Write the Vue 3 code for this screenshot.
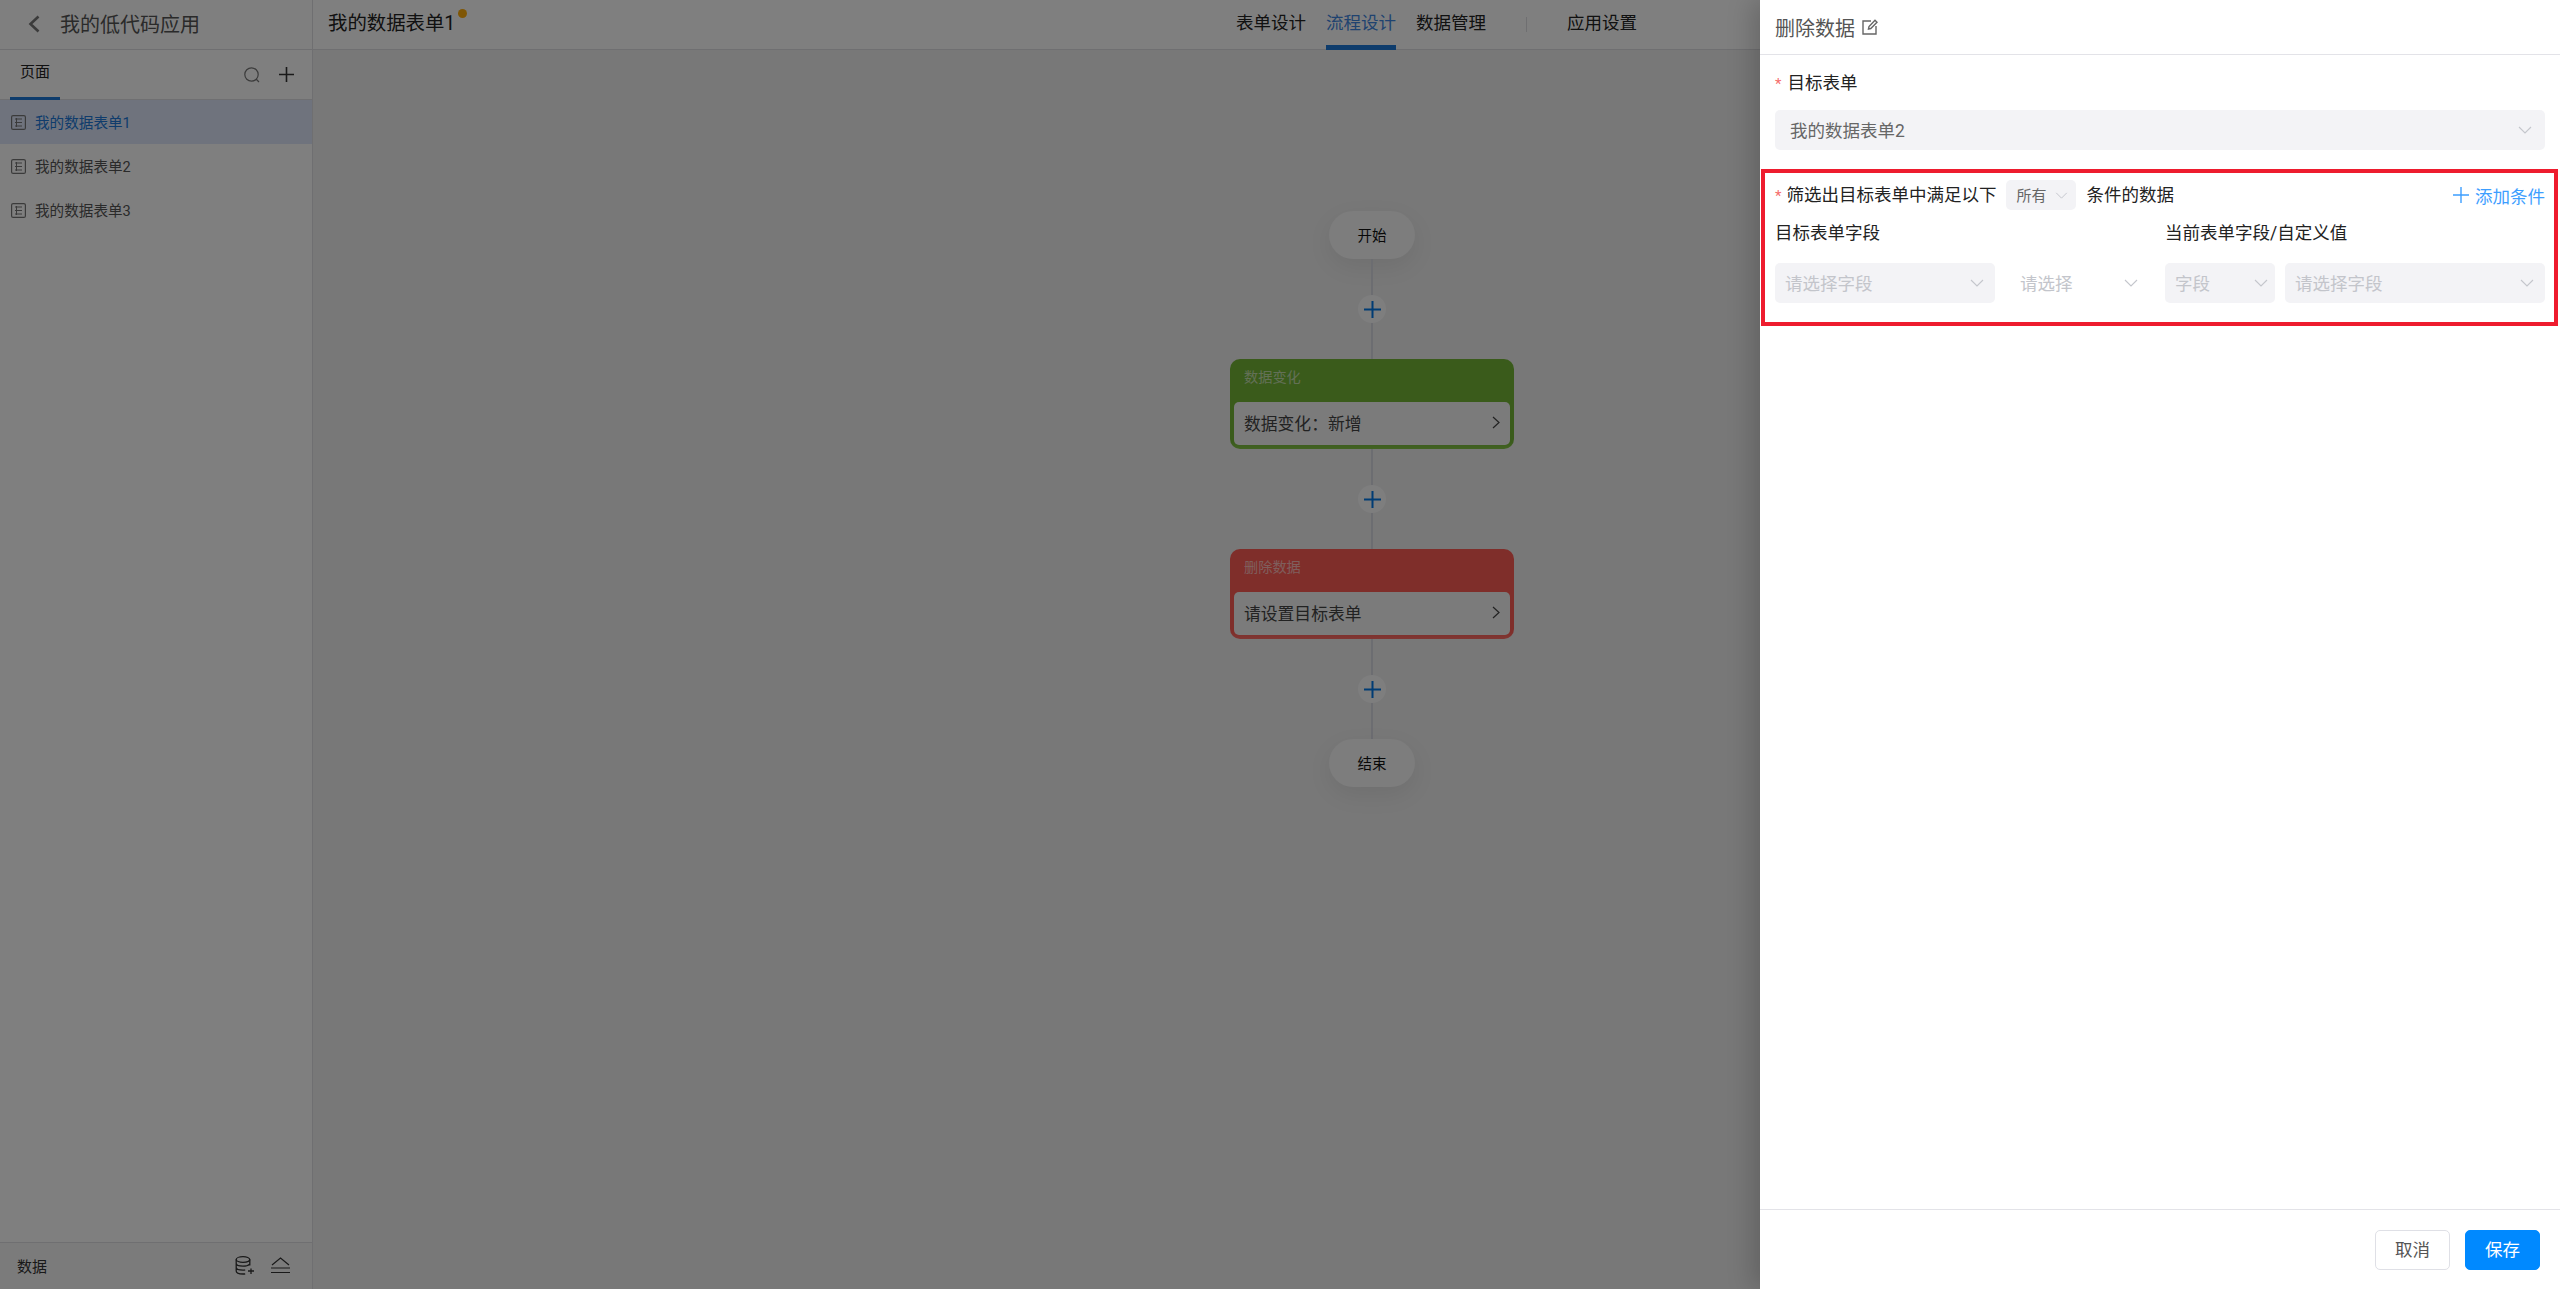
<script setup>
const pages = [
  { name: '我的数据表单1', active: true },
  { name: '我的数据表单2', active: false },
  { name: '我的数据表单3', active: false },
]
const tabs = [
  { name: '表单设计', active: false },
  { name: '流程设计', active: true },
  { name: '数据管理', active: false },
]
</script>

<template>
  <div class="page">
    <header class="topbar">
      <div class="brand">
        <svg class="back" width="12" height="18" viewBox="0 0 12 18"><path d="M10.500 1.500 2.500 9l8 7.500" fill="none" stroke="#777" stroke-width="2.600" /></svg>
        <span>我的低代码应用</span>
      </div>
      <div class="form-title">我的数据表单1<i class="dot"></i></div>
      <nav class="nav">
        <a v-for="t in tabs" :key="t.name" class="nav-item" :class="{ on: t.active }">{{ t.name }}</a>
        <span class="sep"></span>
        <a class="nav-item">应用设置</a>
      </nav>
    </header>

    <div class="body">
      <aside class="side">
        <div class="side-tabs">
          <span class="side-tab">页面</span>
          <div class="side-tools">
            <svg width="16" height="16" viewBox="0 0 16 16"><circle cx="7.500" cy="7.500" r="6.700" fill="none" stroke="#777" stroke-width="1.200" /><path d="m12 12 3 3" stroke="#777" stroke-width="1.200" /></svg>
            <svg width="15" height="15" viewBox="0 0 15 15"><path d="M7.500 0v15M0 7.500h15" stroke="#333" stroke-width="1.600" /></svg>
          </div>
        </div>
        <ul class="pages">
          <li v-for="p in pages" :key="p.name" class="page-row" :class="{ on: p.active }">
            <svg width="15" height="15" viewBox="0 0 15 15"><rect x=".6" y=".6" width="13.800" height="13.800" rx="1.500" fill="none" stroke="#777" stroke-width="1.200" /><path d="M4 4h7M4 7.500h7M4 11h7M5.500 3v9" stroke="#777" stroke-width="1" fill="none" /></svg>
            <span>{{ p.name }}</span>
          </li>
        </ul>
        <div class="side-foot">
          <span>数据</span>
          <div class="foot-tools">
            <svg width="20" height="19" viewBox="0 0 20 19" fill="none" stroke="#333" stroke-width="1.300"><ellipse cx="8" cy="3.500" rx="6.800" ry="2.800" /><path d="M1.200 3.500v11.500c0 1.700 3 3 6.800 3 .8 0 1.500 0 2.200-.2M14.800 3.500v6M1.200 7.300c0 1.600 3 2.900 6.800 2.900 2.800 0 5.300-.7 6.300-1.800M1.200 11.200c0 1.600 3 2.900 6.800 2.900.8 0 1.500 0 2.200-.2M13 15h6M16 12.500v5.500" /></svg>
            <svg width="19" height="17" viewBox="0 0 19 17" fill="none" stroke="#333" stroke-width="1.200"><path d="M1 8 9.500 1 18 8M0 11h19M0 15.500h19" /></svg>
          </div>
        </div>
      </aside>

      <main class="canvas">
        <div class="flow">
          <div class="pill">开始</div>
          <div class="link"><span class="add"><svg width="17" height="17" viewBox="0 0 16 16"><path d="M8 0v16M0 8h16" stroke="#0078e8" stroke-width="1.900" /></svg></span></div>
          <section class="node green">
            <div class="node-title">数据变化</div>
            <div class="node-body"><span>数据变化：新增</span><svg width="8" height="13" viewBox="0 0 8 13"><path d="m1 1 6 5.500L1 12" fill="none" stroke="#444" stroke-width="1.200" /></svg></div>
          </section>
          <div class="link"><span class="add"><svg width="17" height="17" viewBox="0 0 16 16"><path d="M8 0v16M0 8h16" stroke="#0078e8" stroke-width="1.900" /></svg></span></div>
          <section class="node red">
            <div class="node-title">删除数据</div>
            <div class="node-body"><span>请设置目标表单</span><svg width="8" height="13" viewBox="0 0 8 13"><path d="m1 1 6 5.500L1 12" fill="none" stroke="#444" stroke-width="1.200" /></svg></div>
          </section>
          <div class="link"><span class="add"><svg width="17" height="17" viewBox="0 0 16 16"><path d="M8 0v16M0 8h16" stroke="#0078e8" stroke-width="1.900" /></svg></span></div>
          <div class="pill">结束</div>
        </div>
      </main>
    </div>

    <div class="mask"></div>

    <aside class="drawer">
      <div class="drawer-head">
        <span>删除数据</span>
        <svg width="16" height="16" viewBox="0 0 16 16" fill="none" stroke="#666" stroke-width="1.400"><path d="M9 2H1v13h13V7" /><path d="M6.500 10 7 7.500 13 1.200l2 2-6.200 6.300z" /></svg>
      </div>

      <div class="drawer-main">
        <div class="field">
          <div class="label"><b class="req">*</b>目标表单</div>
          <div class="select wide"><span>我的数据表单2</span><svg class="chev" width="14" height="8" viewBox="0 0 14 8"><path d="m1 1 6 6 6-6" fill="none" stroke="#c4c6cc" stroke-width="1.100" /></svg></div>
        </div>

        <section class="filter">
          <div class="filter-top">
            <div class="label inline"><b class="req">*</b>筛选出目标表单中满足以下</div>
            <div class="select mini"><span>所有</span><svg width="13" height="7" viewBox="0 0 14 8"><path d="m1 1 6 6 6-6" fill="none" stroke="#c4c6cc" stroke-width="1.100" /></svg></div>
            <span class="label inline">条件的数据</span>
            <a class="add-cond"><svg width="16" height="16" viewBox="0 0 16 16"><path d="M8 0v16M0 8h16" stroke="#3d9eff" stroke-width="1.400" /></svg>添加条件</a>
          </div>
          <div class="cols-head">
            <span>目标表单字段</span>
            <span>当前表单字段/自定义值</span>
          </div>
          <div class="cols">
            <div class="select dis s1"><span>请选择字段</span><svg width="14" height="8" viewBox="0 0 14 8"><path d="m1 1 6 6 6-6" fill="none" stroke="#c4c6cc" stroke-width="1.100" /></svg></div>
            <div class="select dis s2"><span>请选择</span><svg width="14" height="8" viewBox="0 0 14 8"><path d="m1 1 6 6 6-6" fill="none" stroke="#c4c6cc" stroke-width="1.100" /></svg></div>
            <div class="select dis s3"><span>字段</span><svg width="14" height="8" viewBox="0 0 14 8"><path d="m1 1 6 6 6-6" fill="none" stroke="#c4c6cc" stroke-width="1.100" /></svg></div>
            <div class="select dis s4"><span>请选择字段</span><svg width="14" height="8" viewBox="0 0 14 8"><path d="m1 1 6 6 6-6" fill="none" stroke="#c4c6cc" stroke-width="1.100" /></svg></div>
          </div>
        </section>
      </div>

      <footer class="drawer-foot">
        <button class="btn">取消</button>
        <button class="btn primary">保存</button>
      </footer>
    </aside>
  </div>
</template>

<style>
html, body { margin: 0; padding: 0; overflow: hidden; }
</style>

<style scoped>
* { box-sizing: border-box; }
.page {
  width: 2560px;
  height: 1289px;
  position: relative;
  overflow: hidden;
  display: flex;
  flex-direction: column;
  background: #fff;
  color: #333;
  font-family: Roboto, "Noto Sans CJK SC", sans-serif;
}
.topbar {
  height: 50px;
  flex: none;
  display: flex;
  align-items: stretch;
  border-bottom: 1px solid #dfdfe3;
}
.brand {
  width: 313px;
  flex: none;
  display: flex;
  align-items: center;
  padding-left: 28px;
  gap: 20px;
  font-size: 20px;
  color: #555;
  border-right: 1px solid #dfdfe3;
  padding-bottom: 2px;
}
.form-title {
  margin-left: 15px;
  font-size: 19.400px;
  color: #222;
  line-height: 47px;
  position: relative;
  width: 908px;
}
.dot {
  position: absolute;
  left: 130px;
  top: 9px;
  width: 9px;
  height: 9px;
  border-radius: 50%;
  background: #ffac0a;
}
.nav {
  display: flex;
  align-items: stretch;
}
.nav-item {
  font-size: 17.500px;
  color: #222;
  line-height: 46px;
  margin-right: 20px;
  height: 50px;
  border-bottom: 5px solid transparent;
}
.nav-item.on {
  color: #3f86e0;
  border-bottom-color: #1d79d8;
}
.sep {
  width: 1px;
  height: 15px;
  background: #dfdfe3;
  margin: 17px 40px 0 20px;
}
.body {
  flex: 1;
  display: flex;
  min-height: 0;
}
.side {
  width: 313px;
  flex: none;
  display: flex;
  flex-direction: column;
  border-right: 1px solid #dfdfe3;
}
.side-tabs {
  height: 50px;
  flex: none;
  display: flex;
  justify-content: space-between;
  border-bottom: 1px solid #dfdfe3;
  padding: 0 18px 0 10px;
}
.side-tab {
  width: 50px;
  text-align: center;
  font-size: 15px;
  line-height: 45px;
  color: #222;
  border-bottom: 3px solid #1d79d8;
  height: 50px;
}
.side-tools {
  display: flex;
  align-items: center;
  gap: 19px;
}
.pages {
  list-style: none;
  margin: 0;
  padding: 0;
  flex: 1;
}
.page-row {
  height: 44px;
  display: flex;
  align-items: center;
  gap: 9px;
  padding-left: 11px;
  font-size: 14.600px;
  color: #555;
}
.page-row span { padding-bottom: 1px; }
.page-row.on {
  background: #dee7fb;
  color: #2079d8;
}
.side-foot {
  height: 47px;
  flex: none;
  border-top: 1px solid #dfdfe3;
  background: #f7f7f7;
  display: flex;
  align-items: center;
  justify-content: space-between;
  padding: 0 22px 2px 17px;
  font-size: 15px;
  color: #333;
}
.foot-tools {
  display: flex;
  align-items: center;
  gap: 16px;
}
.canvas {
  flex: 1;
  background: #f0f0f0;
  padding: 161px 0 0 917px;
}
.flow {
  width: 284px;
  display: flex;
  flex-direction: column;
  align-items: center;
}
.pill {
  width: 86px;
  height: 48px;
  flex: none;
  border-radius: 24px;
  background: #fafafa;
  box-shadow: 0 8px 24px rgba(0, 0, 0, .07);
  display: flex;
  align-items: center;
  justify-content: center;
  font-size: 14.500px;
  color: #111;
  padding-bottom: 2px;
}
.link {
  width: 2px;
  height: 100px;
  flex: none;
  background: #d9dae3;
  display: flex;
  align-items: center;
  justify-content: center;
}
.add {
  width: 28px;
  height: 28px;
  flex: none;
  border-radius: 50%;
  background: #fcfcfd;
  display: flex;
  align-items: center;
  justify-content: center;
}
.node {
  width: 284px;
  height: 90px;
  flex: none;
  border-radius: 10px;
  padding: 0 4px 4px;
  display: flex;
  flex-direction: column;
}
.node.green { background: linear-gradient(#75b637 92%, #86c648); }
.node.red { background: linear-gradient(#ff5c54 92%, #ff6f68); }
.node-title {
  height: 43px;
  flex: none;
  padding: 0 10px;
  line-height: 37px;
  font-size: 14.200px;
  color: rgba(255, 255, 255, .6);
}
.node-body {
  flex: 1;
  background: #f6f6f6;
  border-radius: 5px;
  display: flex;
  align-items: center;
  justify-content: space-between;
  padding: 0 10px 2px 10px;
  font-size: 16.800px;
  color: #444;
}
.mask {
  position: absolute;
  inset: 0;
  background: rgba(0, 0, 0, .5);
}
.drawer {
  position: absolute;
  top: 0;
  right: 0;
  bottom: 0;
  width: 800px;
  background: #fff;
  box-shadow: -8px 0 24px rgba(0, 0, 0, .18);
  display: flex;
  flex-direction: column;
}
.drawer-head {
  height: 55px;
  flex: none;
  display: flex;
  align-items: center;
  gap: 7px;
  padding: 0 15px 0;
  font-size: 20px;
  color: #555;
  border-bottom: 1px solid #e3e3e8;
}
.drawer-main {
  flex: 1;
  padding: 13px 0 0;
}
.field {
  padding: 0 15px;
}
.label {
  font-size: 17.500px;
  color: #222;
  line-height: 30px;
  height: 30px;
}
.label.inline { height: auto; }
.req {
  color: #f56c6c;
  font-weight: 400;
  font-size: 15px;
  margin: 0 6px 0 0;
}
.field .label { margin-bottom: 12px; }
.select {
  display: flex;
  align-items: center;
  justify-content: space-between;
  background: #f3f3f6;
  border-radius: 5px;
  height: 40px;
  font-size: 17.500px;
  color: #666;
}
.select > span { padding-bottom: 2px; }
.select.wide {
  padding: 0 13px 0 15px;
}
.filter {
  margin: 19px 2px 0 1px;
  height: 157px;
  border: 4px solid #ee1c2e;
  padding: 7px 9px 0 10px;
}
.filter-top {
  display: flex;
  align-items: center;
  height: 30px;
}
.filter-top .req { margin-right: 5px; }
.mini {
  width: 70px;
  height: 30px;
  margin: 0 10px;
  padding: 0 8px 0 10px;
  font-size: 15px;
}
.add-cond {
  margin-left: auto;
  display: flex;
  align-items: center;
  gap: 6px;
  font-size: 17.500px;
  color: #3d9eff;
}
.cols-head {
  display: flex;
  margin-top: 8px;
  height: 30px;
  line-height: 30px;
  font-size: 17.500px;
  color: #222;
}
.cols-head span:first-child { width: 390px; }
.cols {
  display: flex;
  align-items: center;
  gap: 10px;
  margin-top: 15px;
}
.dis {
  color: #c3c5cb;
  padding: 0 11px 0 10px;
}
.s1 { width: 220px; }
.s2 { width: 150px; background: transparent; padding: 0 17px 0 15px; }
.s3 { width: 110px; padding-right: 7px; }
.s4 { width: 260px; }
.drawer-foot {
  height: 80px;
  flex: none;
  border-top: 1px solid #e3e3e8;
  display: flex;
  align-items: center;
  justify-content: flex-end;
  gap: 15px;
  padding: 0 20px 0 0;
}
.btn {
  width: 75px;
  height: 40px;
  border-radius: 5px;
  border: 1px solid #dfe0e6;
  background: #fff;
  color: #555;
  font-family: inherit;
  font-size: 17.500px;
  padding: 0 0 2px;
}
.btn.primary {
  background: #0089ff;
  border-color: #0089ff;
  color: #fff;
}
</style>
